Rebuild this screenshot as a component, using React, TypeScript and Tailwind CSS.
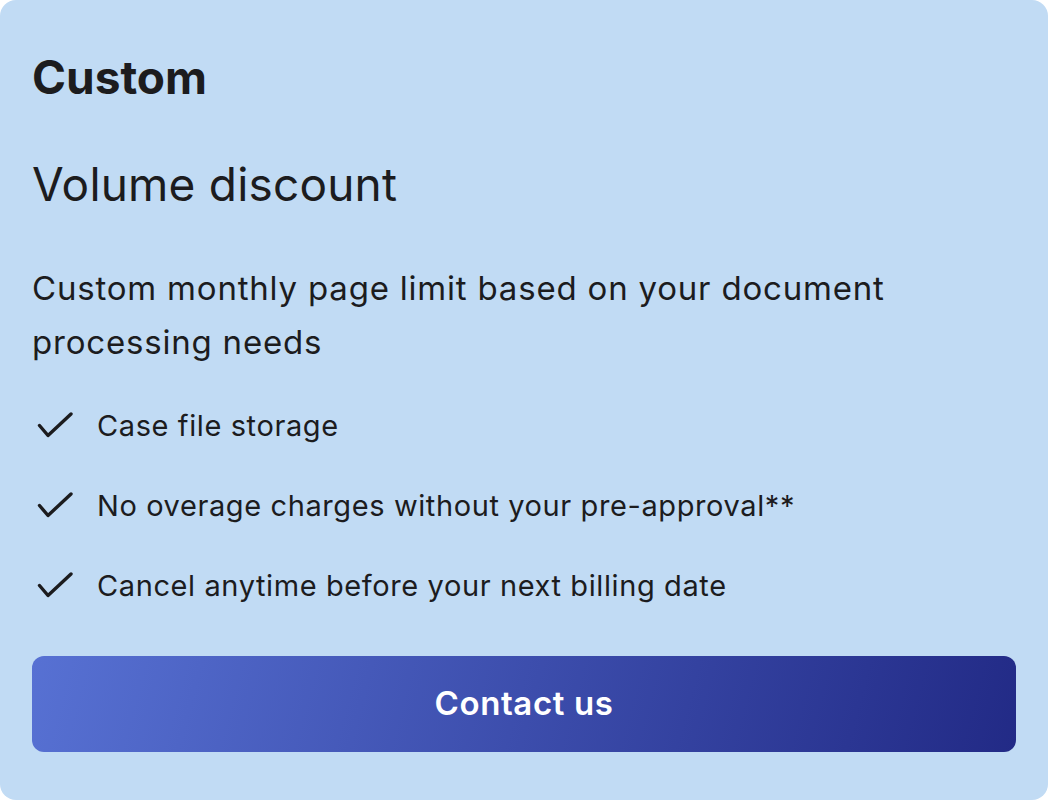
const features = [
    "Case file storage",
    "No overage charges without your pre-approval**",
    "Cancel anytime before your next billing date",
];

function CheckMark() {
    return (
        <svg width="36" height="28" viewBox="0 0 36 28" fill="none" className="shrink-0">
            <polyline points="2.5,13.5 11,23.5 34,2" stroke="#1c1c1e" strokeWidth="3.4" strokeLinecap="round" strokeLinejoin="round" />
        </svg>
    );
}

export default function App() {
    return (
        <div className="min-h-screen w-full bg-white" style={{ fontFamily: "Inter, 'Noto Sans', sans-serif" }}>
            <div className="flex h-[800px] w-[1048px] flex-col rounded-2xl bg-[#c1dbf4] px-8 pt-[51px] text-[#1c1c1e]">
                <h2 className="text-[46px] font-bold leading-[52px]">Custom</h2>
                <p className="mt-[55px] text-[46px] leading-[52px] tracking-[0.2px]">Volume discount</p>
                <p className="mt-[51px] text-[33px] leading-[54px] tracking-[0.8px]">
                    Custom monthly page limit based on your document processing needs
                </p>
                <ul className="mt-[37px] flex flex-col gap-[40px]">
                    {features.map((f) => (
                        <li key={f} className="flex items-center text-[29px] leading-[40px] tracking-[0.6px]">
                            <span className="ml-[5px] mr-[24px] flex">
                                <CheckMark />
                            </span>
                            <span>{f}</span>
                        </li>
                    ))}
                </ul>
                <button className="mt-[50px] flex h-[96px] w-full items-center justify-center rounded-xl bg-[linear-gradient(105deg,#5771d3,#222a86)] text-[33px] font-semibold tracking-[0.6px] text-white">
                    Contact us
                </button>
            </div>
        </div>
    );
}
